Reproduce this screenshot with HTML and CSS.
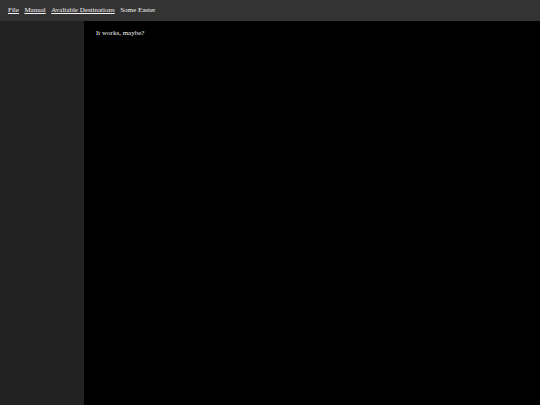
FILE: index.html
```html
<!DOCTYPE html>
<html>
<head>
<meta charset="utf-8">
<link rel="stylesheet" href="styles.css">
</head>
<body>
<header class="topbar">
  <a class="nav-link" href="#">File</a>
  <a class="nav-link" href="#">Manual</a>
  <a class="nav-link" href="#">Avaliable Destinations</a>
  <span class="nav-text">Some Easter</span>
</header>
<div class="layout">
  <aside class="sidebar"></aside>
  <main class="content">
    <p class="message">It works, maybe?</p>
  </main>
</div>
</body>
</html>
```
FILE: styles.css
```css
html, body {
  margin: 0;
  height: 100%;
  background: #000;
  font-family: "Liberation Serif", "Times New Roman", serif;
  font-size: 7px;
  color: #f2f2f2;
}
body {
  display: flex;
  flex-direction: column;
}
.topbar {
  height: 21px;
  background: #333333;
  display: flex;
  align-items: center;
  gap: 5.5px;
  padding: 0 8px 1px;
  box-sizing: border-box;
  flex: none;
}
.nav-link {
  color: #f2f2f2;
  text-decoration: underline;
}
.nav-text {
  color: #f2f2f2;
}
.layout {
  flex: 1;
  display: flex;
}
.sidebar {
  width: 84px;
  background: #222222;
  flex: none;
}
.content {
  flex: 1;
  background: #000;
  padding: 8px 12px;
}
.message {
  margin: 0;
}
```
